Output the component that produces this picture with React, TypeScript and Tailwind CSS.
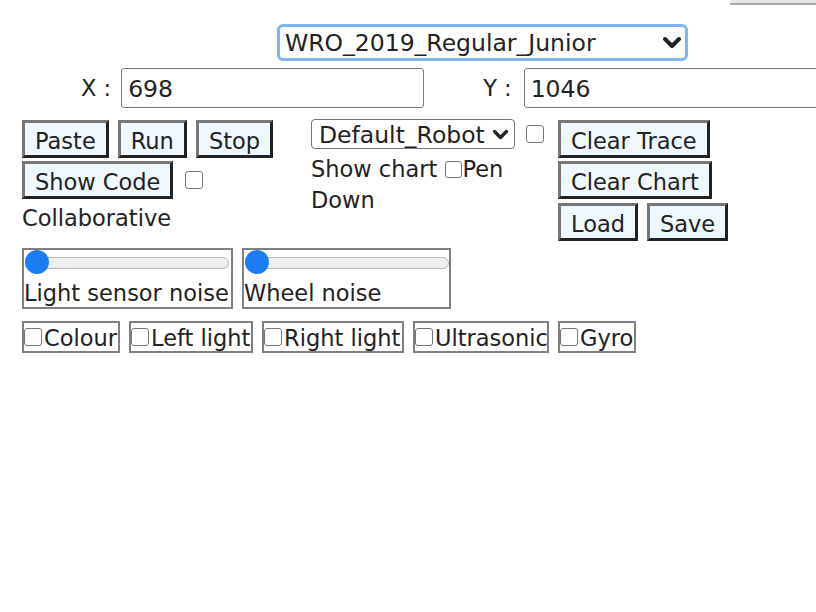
import React from 'react'

const BTN =
  'h-[38px] px-[10px] pt-[3px] flex items-center bg-[#f0f8ff] border-[3px] border-t-[#777777] border-l-[#777777] border-b-[#222222] border-r-[#222222] leading-[26px] whitespace-nowrap'

const BOX = 'appearance-none shrink-0 bg-white border border-[#767676] rounded-[3px]'

const SENSORS = [
  { label: 'Colour', w: 'w-[98px]' },
  { label: 'Left light', w: 'w-[124px]' },
  { label: 'Right light', w: 'w-[142px]' },
  { label: 'Ultrasonic', w: 'w-[136px]' },
  { label: 'Gyro', w: 'w-[78px]' },
]

function Chevron({ className }: { className?: string }) {
  return (
    <svg viewBox="0 0 20 13" className={className} fill="none">
      <polyline
        points="3,3 10,10 17,3"
        stroke="#222"
        strokeWidth="4"
        strokeLinecap="round"
        strokeLinejoin="round"
      />
    </svg>
  )
}

function Slider({ label, width }: { label: string; width: string }) {
  return (
    <div className={`${width} h-[61px] border-2 border-[#808080] flex flex-col`}>
      <div className="relative h-[30px] ml-[1px] w-[204px]">
        <div className="mt-[7px] h-[12px] rounded-full bg-[#efefef] border border-[#b8b8b8]" />
        <div className="absolute left-0 top-0 w-[24px] h-[24px] rounded-full bg-[#1b7cf4]" />
      </div>
      <div className="leading-[27px] pt-[1px] whitespace-nowrap">{label}</div>
    </div>
  )
}

export default function App() {
  return (
    <div className="w-[816px] h-[612px] overflow-hidden bg-white text-[#222] text-[22.5px] font-['DejaVu_Sans','Verdana',sans-serif]">
      {/* leftover strip from the block above */}
      <div className="h-[5px] ml-[730px] bg-[#e6e6e6] border-b-2 border-[#a8a8a8]" />

      {/* Field select */}
      <div className="flex pl-[277px] mt-[19px]">
        <div className="w-[411px] h-[37px] border-[3px] border-[#80b4f2] rounded-[6px] flex items-center pl-[5px] pr-[3px]">
          <select className="appearance-none flex-1 bg-transparent outline-none p-0 pt-[1px] text-[23.5px] leading-[28px]">
            <option>WRO_2019_Regular_Junior</option>
          </select>
          <Chevron className="w-[20px] h-[13px]" />
        </div>
      </div>

      {/* Position */}
      <div className="flex items-center mt-[7px] pl-[81px]">
        <span className="whitespace-nowrap pt-[2px]">X :</span>
        <input
          defaultValue="698"
          className="ml-[10px] w-[303px] h-[40px] shrink-0 border border-[#7a7a7a] rounded-[3px] pl-[6px] pr-[2px] pt-[2px] text-[23.5px] outline-none"
        />
        <span className="ml-[59px] whitespace-nowrap pt-[2px]">Y :</span>
        <input
          defaultValue="1046"
          className="ml-[12px] w-[303px] h-[40px] shrink-0 border border-[#7a7a7a] rounded-[3px] pl-[6px] pr-[2px] pt-[2px] text-[23.5px] outline-none"
        />
      </div>

      {/* Controls */}
      <div className="flex items-start mt-[11px] pl-[22px]">
        <div className="w-[289px] shrink-0">
          <div className="flex gap-[9px] mt-[1px]">
            <button className={BTN}>Paste</button>
            <button className={BTN}>Run</button>
            <button className={BTN}>Stop</button>
          </div>
          <div className="flex items-center mt-[3px]">
            <button className={BTN}>Show Code</button>
            <input type="checkbox" className={`${BOX} ml-[12px] w-[18px] h-[18px]`} />
          </div>
          <div className="mt-[6px] leading-[26px]">Collaborative</div>
        </div>

        <div className="w-[247px] shrink-0">
          <div className="flex items-center h-[30px]">
            <div className="w-[204px] h-[30px] border border-[#767676] rounded-[4px] flex items-center pl-[7px] pr-[5px]">
              <select className="appearance-none flex-1 bg-transparent outline-none p-0 pt-[1px] text-[23.5px] leading-[28px]">
                <option>Default_Robot</option>
              </select>
              <Chevron className="w-[17px] h-[11px]" />
            </div>
            <input type="checkbox" className={`${BOX} ml-[11px] w-[18px] h-[18px]`} />
          </div>
          <div className="mt-[5px] leading-[31px]">
            Show chart{' '}
            <input type="checkbox" className={`${BOX} inline-block align-[-1px] w-[17px] h-[17px] mr-[1px]`} />
            Pen
            <br />
            Down
          </div>
        </div>

        <div className="flex flex-col items-start">
          <button className={`${BTN} mt-[1px]`}>Clear Trace</button>
          <button className={`${BTN} mt-[3px]`}>Clear Chart</button>
          <div className="flex gap-[9px] mt-[4px]">
            <button className={BTN}>Load</button>
            <button className={BTN}>Save</button>
          </div>
        </div>
      </div>

      {/* Noise sliders */}
      <div className="flex gap-[9px] mt-[7px] pl-[22px]">
        <Slider label="Light sensor noise" width="w-[211px]" />
        <Slider label="Wheel noise" width="w-[209px]" />
      </div>

      {/* Sensor toggles */}
      <div className="flex gap-[9px] mt-[12px] pl-[22px]">
        {SENSORS.map(({ label, w }) => (
          <label key={label} className={`${w} h-[32px] border-2 border-[#808080] flex items-center overflow-hidden`}>
            <input type="checkbox" className={`${BOX} w-[18px] h-[18px] mr-[2px]`} />
            <span className="leading-[26px] pt-[1px] whitespace-nowrap">{label}</span>
          </label>
        ))}
      </div>
    </div>
  )
}
